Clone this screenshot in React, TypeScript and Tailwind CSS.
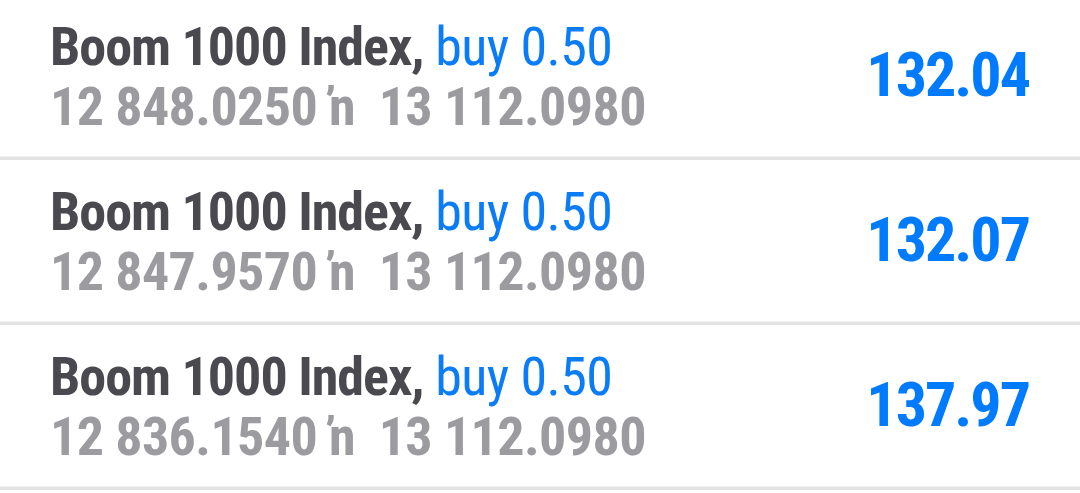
import React from "react";

type Deal = { open: string; close: string; profit: string };

const deals: Deal[] = [
  { open: "12 848.0250", close: "13 112.0980", profit: "132.04" },
  { open: "12 847.9570", close: "13 112.0980", profit: "132.07" },
  { open: "12 836.1540", close: "13 112.0980", profit: "137.97" },
];

const font = { fontFamily: '"Roboto Condensed", Roboto, "Liberation Sans", sans-serif' };

function Row({ d }: { d: Deal }) {
  return (
    <div className="flex flex-col">
      <div className="flex h-[161px] items-center justify-between pl-[50px] pr-[51px]">
        <div className="flex flex-col pt-[2px]">
          <div className="whitespace-pre text-[54px] leading-[60px]">
            <span className="font-bold tracking-[-1px] text-[#4a494f]">Boom 1000 Index,</span>
            <span className="tracking-[-0.6px] text-[#0a7cf8]"> buy 0.50</span>
          </div>
          <div className="whitespace-pre text-[54px] leading-[60px] font-bold tracking-[-0.6px] text-[#9c9ba0]">
            {d.open} ŉ  {d.close}
          </div>
        </div>
        <div className="pb-[2px] text-[62px] leading-none font-bold tracking-[-2px] text-[#007bfd]">{d.profit}</div>
      </div>
      <div className="h-px bg-[#f0f0f0]" />
      <div className="h-[3px] bg-[#e3e3e3]" />
    </div>
  );
}

export default function App() {
  return (
    <div className="h-[493px] w-[1080px] overflow-hidden bg-white" style={font}>
      <div className="-mt-[5px] flex flex-col">
        {deals.map((d, i) => (
          <Row key={i} d={d} />
        ))}
      </div>
    </div>
  );
}
